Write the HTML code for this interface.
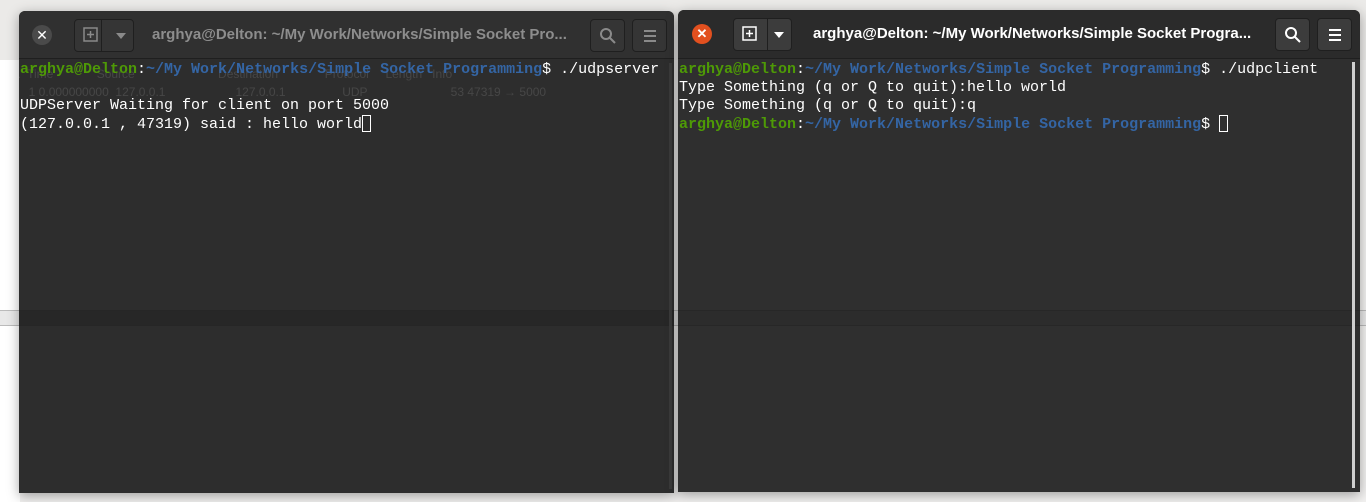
<!DOCTYPE html>
<html><head><style>
body{margin:0;width:1366px;height:502px;background:#f2f1f0;position:relative;overflow:hidden;font-family:"Liberation Sans",sans-serif}
.tb{position:absolute;top:0;left:0;width:1366px;height:60px;background:#ebeae8}
.win{position:absolute;background:#2f2f2f;box-shadow:0 3px 12px rgba(0,0,0,.35);border-radius:6px 6px 0 0;overflow:hidden}
.hd{position:absolute;left:0;right:0;top:0;height:47px;border-bottom:1px solid #1f1f1f}
.btn{position:absolute;top:8px;height:33px;border:1px solid #1f1f1f;border-radius:4px;box-sizing:border-box}
.title{position:absolute;top:15px;font-size:15px;font-weight:bold;white-space:nowrap}
.term{position:absolute;left:1px;top:50px;font-family:"Liberation Mono",monospace;font-size:15px;line-height:18px;color:#fff;white-space:pre}
.g{color:#4e9a06;font-weight:bold}.b{color:#3465a4;font-weight:bold}
.cur{display:inline-block;width:9px;height:17px;border:1px solid #fff;box-sizing:border-box;vertical-align:-4px}
.ico{position:absolute;fill:none;stroke-width:2}
</style></head><body>
<div class="tb"></div>
<div style="position:absolute;left:0;top:60px;width:20px;height:442px;background:#fff"></div>
<div style="position:absolute;left:0;top:310px;width:1366px;height:14px;background:#e8e8e8;border-top:1px solid #bbb;border-bottom:1px solid #bbb"></div>

<div class="win" style="left:19px;top:11px;width:655px;height:482px;background:#2d2d2d">
 <div class="hd" style="background:#303030">
  <div style="position:absolute;left:13px;top:14px;width:20px;height:20px;border-radius:50%;background:#4a4a4a;color:#fff;font-size:14px;text-align:center;line-height:20px">✕</div>
  <div class="btn" style="left:55px;width:60px;background:#353535"></div>
  <div style="position:absolute;left:82px;top:9px;width:1px;height:31px;background:#1f1f1f"></div>
  <svg class="ico" style="left:63px;top:15px" width="18" height="18"><rect x="2" y="2" width="13" height="13" stroke="#8a8a8a" stroke-width="1.5" fill="none"/><path d="M8.5 5v7M5 8.5h7" stroke="#8a8a8a" stroke-width="1.5"/></svg>
  <svg style="position:absolute;left:97px;top:22px" width="10" height="6"><path d="M0 0h10L5 6z" fill="#8a8a8a"/></svg>
  <div class="title" style="left:133px;color:#8d8d8d">arghya@Delton: ~/My Work/Networks/Simple Socket Pro...</div>
  <div class="btn" style="left:571px;width:35px;background:#353535"></div>
  <svg style="position:absolute;left:580px;top:16px" width="18" height="18"><circle cx="7" cy="7" r="5" stroke="#8a8a8a" stroke-width="2" fill="none"/><path d="M11 11l5 5" stroke="#8a8a8a" stroke-width="2"/></svg>
  <div class="btn" style="left:613px;width:35px;background:#353535"></div>
  <svg style="position:absolute;left:624px;top:18px" width="14" height="14"><path d="M1 2h12M1 7h12M1 12h12" stroke="#8a8a8a" stroke-width="2"/></svg>
 </div>
 <div class="term" style="color:rgba(255,255,255,.12);top:54px;font-family:'Liberation Sans',sans-serif;font-size:12px;left:-17px">No.  Time             Source                         Destination              Protocol     Length   Info
        1 0.000000000  127.0.0.1                     127.0.0.1                 UDP                         53 47319 → 5000</div>
 <div class="term"><span class="g">arghya@Delton</span>:<span class="b">~/My Work/Networks/Simple Socket Programming</span>$ ./udpserver

UDPServer Waiting for client on port 5000
(127.0.0.1 , 47319) said : hello world<span class="cur"></span></div>
 <div style="position:absolute;left:0;right:0;top:299px;height:14px;background:rgba(0,0,0,.12);border-top:1px solid #262626;border-bottom:1px solid #262626"></div>
 <div style="position:absolute;right:2px;top:52px;width:3px;height:426px;background:#3a3a3a"></div>
</div>

<div class="win" style="left:678px;top:10px;width:682px;height:482px">
 <div class="hd" style="background:#2b2b2b;height:48px">
  <div style="position:absolute;left:14px;top:14px;width:20px;height:20px;border-radius:50%;background:#e2501f;color:#fff;font-size:13px;font-weight:bold;text-align:center;line-height:20px">✕</div>
  <div class="btn" style="left:55px;width:59px;background:#3c3c3c"></div>
  <div style="position:absolute;left:89px;top:9px;width:1px;height:31px;background:#1f1f1f"></div>
  <svg style="position:absolute;left:63px;top:15px" width="18" height="18"><rect x="2" y="2" width="13" height="13" stroke="#fff" stroke-width="1.5" fill="none"/><path d="M8.5 5v7M5 8.5h7" stroke="#fff" stroke-width="1.5"/></svg>
  <svg style="position:absolute;left:96px;top:22px" width="10" height="6"><path d="M0 0h10L5 6z" fill="#fff"/></svg>
  <div class="title" style="left:135px;color:#fff">arghya@Delton: ~/My Work/Networks/Simple Socket Progra...</div>
  <div class="btn" style="left:597px;width:35px;background:#3c3c3c"></div>
  <svg style="position:absolute;left:606px;top:16px" width="18" height="18"><circle cx="7" cy="7" r="5" stroke="#fff" stroke-width="2" fill="none"/><path d="M11 11l5 5" stroke="#fff" stroke-width="2"/></svg>
  <div class="btn" style="left:639px;width:35px;background:#3c3c3c"></div>
  <svg style="position:absolute;left:650px;top:18px" width="14" height="14"><path d="M1 2h12M1 7h12M1 12h12" stroke="#fff" stroke-width="2"/></svg>
 </div>
 <div class="term" style="top:51px"><span class="g">arghya@Delton</span>:<span class="b">~/My Work/Networks/Simple Socket Programming</span>$ ./udpclient
Type Something (q or Q to quit):hello world
Type Something (q or Q to quit):q
<span class="g">arghya@Delton</span>:<span class="b">~/My Work/Networks/Simple Socket Programming</span>$ <span class="cur"></span></div>
 <div style="position:absolute;left:0;right:0;top:300px;height:14px;background:rgba(0,0,0,.06);border-top:1px solid #272727;border-bottom:1px solid #272727"></div>
 <div style="position:absolute;right:5px;top:52px;width:3px;height:426px;background:#cfcfcf"></div>
</div>
</body></html>
